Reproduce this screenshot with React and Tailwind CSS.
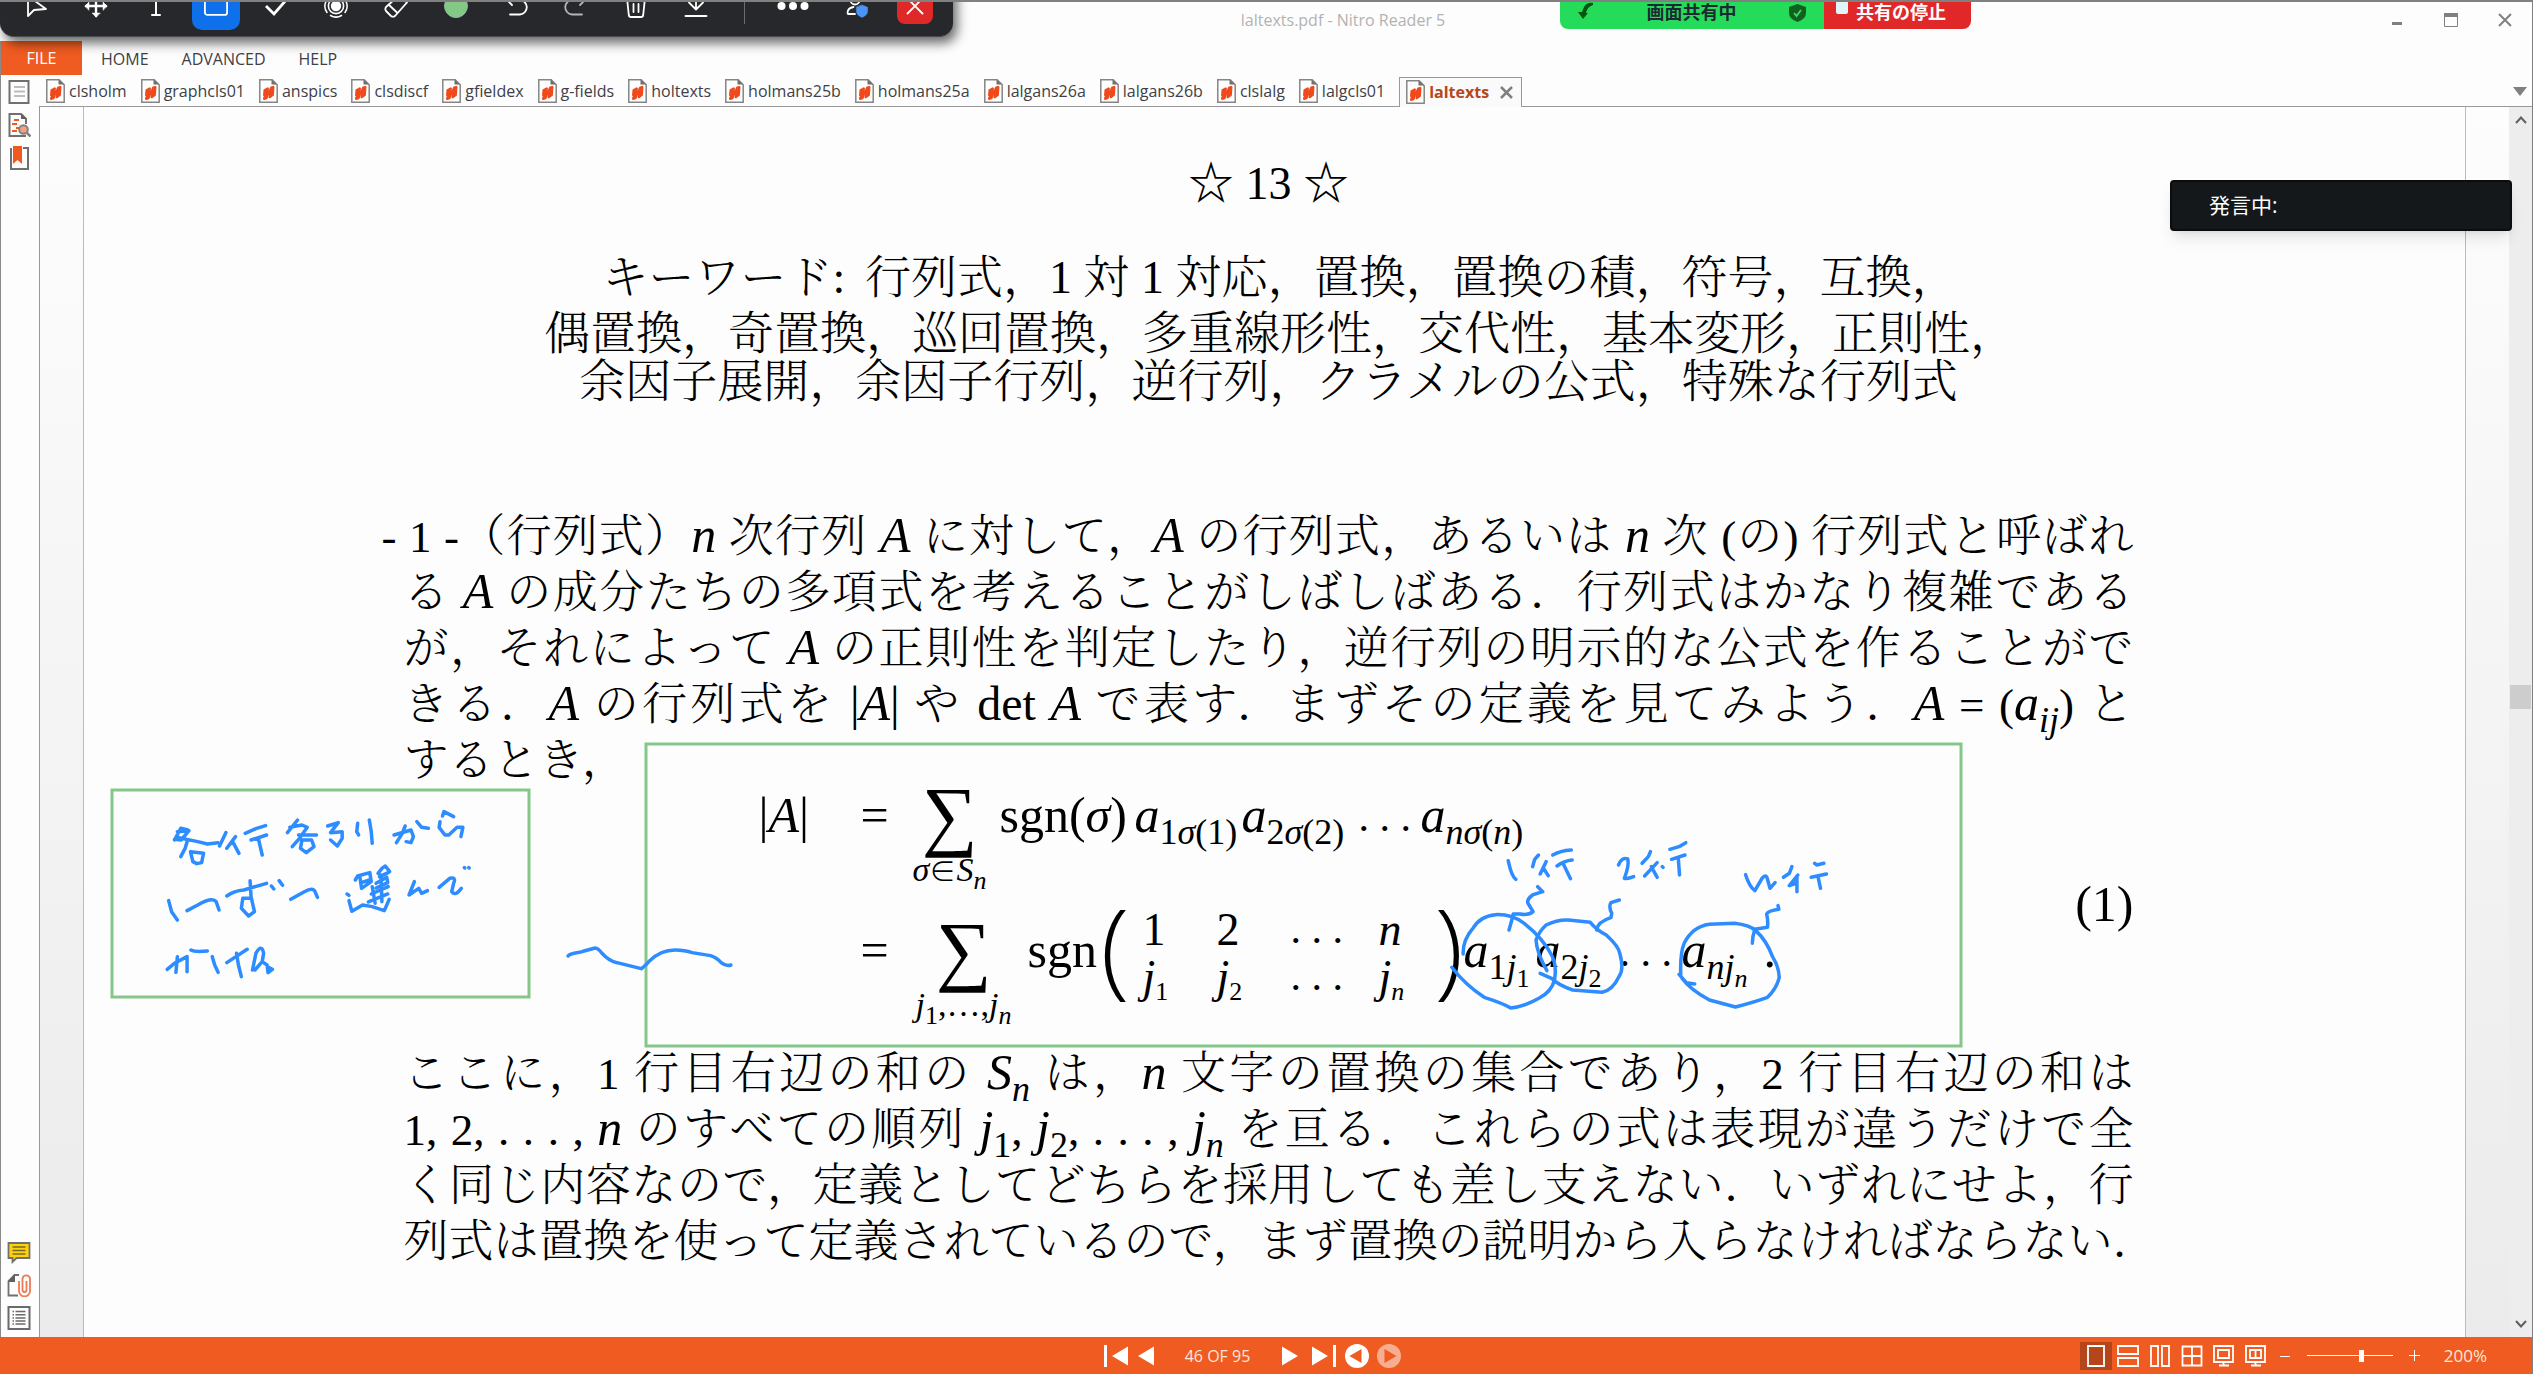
import React from "react";

const tabs = [
  "clsholm", "graphcls01", "anspics", "clsdiscf", "gfieldex", "g-fields", "holtexts",
  "holmans25b", "holmans25a", "lalgans26a", "lalgans26b", "clslalg", "lalgcls01",
];

/* ---------- small icons ---------- */

function PdfIcon() {
  return (
    <svg width="19" height="24" viewBox="0 0 19 24" className="shrink-0" aria-hidden="true">
      <path d="M.8.8h12.4l5 5v17.4H.8z" fill="#fff" stroke="#858585" strokeWidth="1.5" />
      <path d="M12.5.5v5h5.5z" fill="#6f6f6f" />
      <path d="M4.500 10.500l4.200-2.300 1.300.9-.5 3 1.800-4.300 3.200-1.100 1 1.100-.6 8.600-4 3.200-1.400-.8.4-3.200-1.500 4.400-3.600 1.200-1-1.600 1-2.400-.8-.6z" fill="#f04a1c" />
    </svg>
  );
}

const S = ({ children, size = 24, ...p }) => (
  <svg width={size} height={size} viewBox="0 0 24 24" fill="none" stroke="#fff" strokeWidth="1.8" strokeLinecap="round" strokeLinejoin="round" aria-hidden="true" {...p}>
    {children}
  </svg>
);

const tools = [
  { label: "選択", icon: <S><path d="M4 2v20l6-6 12-1z" /></S> },
  { label: "移動", icon: <S><path d="M12 2v20M2 12h20" strokeWidth="2.4" /><path d="M12 1l-4 4h8zM12 23l-4-4h8zM1 12l4-4v8zM23 12l-4-4v8z" fill="#fff" strokeWidth=".5" /></S> },
  { label: "テキスト", icon: <S><path d="M5 5V2h14v3M12 2v19M8 21h8" strokeWidth="2" /></S> },
  { label: "四角形", active: true, icon: <S><rect x="0.9" y="0.9" width="22.2" height="20" rx="2.5" /></S> },
  { label: "スタンプ", icon: <S><path d="M2 12l8 8L23 5" strokeWidth="2.8" strokeLinecap="butt" strokeLinejoin="miter" /></S> },
  { label: "スポットライト", icon: <S><circle cx="12" cy="12" r="4.3" fill="#fff" /><circle cx="12" cy="12" r="7.6" strokeWidth="1.6" /><path d="M6.5 21.500a10.800 10.800 0 0 0 11 0M2 7.500a10.800 10.800 0 0 0 1 11M22 7.500a10.800 10.800 0 0 1-1 11" strokeWidth="1.5" /></S> },
  { label: "消しゴム", icon: <S><path d="M15 1.500l8 7L11 22q-2 1.400-4 0l-5-5q-1.300-2 0-4zM4.500 10.500l9 8.500" /></S> },
  { label: "色", icon: <S><circle cx="12" cy="12" r="11.500" fill="#84c886" stroke="#93b7a0" strokeWidth="1" /></S> },
  { label: "元に戻す", icon: <S><path d="M8 1L3 6l5 5M3 6h12a7 7 0 0 1 1 14.500H6" /></S> },
  { label: "やり直し", icon: <S stroke="#b4b5b7"><path d="M16 1l5 5-5 5M21 6H9a7 7 0 0 0-1 14.500h10" /></S> },
  { label: "消去", icon: <S><path d="M1 4h22M3 4l1.800 17q.3 2 2 2h10.400q1.700 0 2-2L21 4M9.500 10v8M14.500 10v8M8 4V1h8v3" /></S> },
  { label: "保存", icon: <S><path d="M12 0v15M5 8.500l7 7 7-7M1.500 22h21" /></S> },
];

function ShareToolbar() {
  return (
    <div role="toolbar" aria-label="コメントツール" className="absolute -top-[27px] left-0 z-20 flex h-[62px] items-center rounded-[14px] border-b border-[#4a4b4e] bg-[#26282c] pr-5 pl-3 shadow-[4px_6px_12px_rgba(0,0,0,0.6)]">
      <div className="flex gap-3">
        {tools.map((t) => (
          <button key={t.label} aria-label={t.label} className={"flex size-12 items-center justify-center rounded-[10px] " + (t.active ? "bg-[#0e71eb]" : "")}>
            {t.icon}
          </button>
        ))}
      </div>
      <div className="mx-6 h-9 w-px bg-[#6b6c6f]" />
      <button aria-label="詳細" className="flex size-12 items-center justify-center">
        <svg width="32" height="24" viewBox="0 0 32 24" fill="#fff" aria-hidden="true"><circle cx="4.500" cy="12" r="4" /><circle cx="16" cy="12" r="4" /><circle cx="27.500" cy="12" r="4" /></svg>
      </button>
      <button aria-label="参加者" className="ml-4 flex size-12 items-center justify-center">
        <S><circle cx="10" cy="6" r="4.500" /><path d="M10 20H3.500q-1 0-1-1 0-5 6-6" /><path d="M17 11l5.600 2.200v4.300q0 3.700-5.600 6-5.600-2.300-5.600-6v-4.300z" fill="#4a95f5" stroke="#4a95f5" strokeWidth=".5" /></S>
      </button>
      <button aria-label="閉じる" className="ml-4 flex size-9 items-center justify-center rounded-lg bg-[#df2828]">
        <S><path d="M4.500 4.500l15 15M19.500 4.500l-15 15" /></S>
      </button>
    </div>
  );
}

function SharePill() {
  return (
    <div className="absolute top-0 right-[561px] z-20 flex h-[27px] overflow-hidden rounded-b-lg text-[18px] leading-5 font-bold">
      <div className="flex w-[264px] items-start justify-between bg-[#24db5a] px-[18px] text-[#1d2a33]">
        <svg width="16" height="18" viewBox="0 0 16 18" aria-hidden="true"><path d="M15 1Q9 0 6 5L4 10H0l5 7 5-6H8q1-6 7-8z" fill="#0a5312" /></svg>
        <span>画面共有中</span>
        <svg width="17" height="18" viewBox="0 0 17 18" className="mt-0.5" aria-hidden="true"><path d="M8.500 0L17 3v6q0 6-8.500 9Q0 15 0 9V3z" fill="#12601f" /><path d="M5 9l2.500 3L12 6" fill="none" stroke="#3ddc6a" strokeWidth="1.800" /></svg>
      </div>
      <button className="flex w-[147px] items-start bg-[#e02828] pl-3 text-white">
        <span className="mr-2 size-3 rounded-b-xs bg-[#dff6f8]" />
        <span>共有の停止</span>
      </button>
    </div>
  );
}

/* ---------- mathematics ---------- */

const I = ({ children }) => <i className="font-[Liberation_Serif] text-[50px] leading-none">{children}</i>;
const N = ({ children }) => <span className="font-[Liberation_Serif] text-[48px] leading-none">{children}</span>;
const Sub = ({ children }) => <span className="relative top-3 font-[Liberation_Serif] text-[36px] leading-none">{children}</span>;
const Sub2 = ({ children }) => <span className="relative top-2 text-[26px] leading-none">{children}</span>;
const Dots = () => <span className="text-[42px]">. . .</span>;

function Line({ children, first, last }) {
  return (
    <p className={"h-14 text-[45px] leading-[56px] whitespace-nowrap " + (first ? "-ml-[22px] " : "") + (last ? "" : "[text-align-last:justify]")}>
      {children}
    </p>
  );
}

function Sum({ children, className }) {
  return (
    <span className={"flex h-[82px] flex-col items-center " + className}>
      <span className="h-20 text-[78px] leading-[82px]">∑</span>
      <span className="text-[34px] leading-8">{children}</span>
    </span>
  );
}

function Equation() {
  const row = "flex h-[82px] items-center whitespace-nowrap";
  const fence = "-mt-3 font-[Open_Sans] text-[106px] leading-[94px] font-light";
  return (
    <div className="-mt-[15px] mb-3 flex items-center justify-between pl-[355px] font-[Liberation_Serif] text-[50px] leading-[50px]">
      <div className="flex flex-col gap-[53px] pb-[43px]">
        <div className={row}>
          <span className="w-[102px]">|<i>A</i>|</span>
          <span className="w-[47px]">=</span>
          <Sum className="w-[84px]"><i>σ</i>∈<i>S</i><Sub2><i>n</i></Sub2></Sum>
          <span className="ml-2 w-[135px]">sgn(<i>σ</i>)</span>
          <span className="w-[107px]"><i>a</i><Sub>1<i>σ</i>(1)</Sub></span>
          <span className="w-[117px]"><i>a</i><Sub>2<i>σ</i>(2)</Sub></span>
          <span className="w-[62px]"><Dots /></span>
          <span><i>a</i><Sub><i>nσ</i>(<i>n</i>)</Sub></span>
        </div>
        <div className={row}>
          <span className="w-[102px]" />
          <span className="w-[47px]">=</span>
          <Sum className="w-[112px]"><i>j</i><Sub2>1</Sub2>,…,<i>j</i><Sub2><i>n</i></Sub2></Sum>
          <span className="ml-2 w-[73px]">sgn</span>
          <span className={"w-[42px] " + fence}>(</span>
          <span className="mt-1.5 grid grid-cols-[74px_74px_88px_56px] text-[46px] leading-[47px]">
            <span>1</span><span>2</span><Dots /><i>n</i>
            <span><i>j</i><Sub2>1</Sub2></span><span><i>j</i><Sub2>2</Sub2></span><Dots /><span><i>j</i><Sub2><i>n</i></Sub2></span>
          </span>
          <span className={"w-[29px] " + fence}>)</span>
          <span className="w-[72px]"><i>a</i><Sub>1<i>j</i><Sub2>1</Sub2></Sub></span>
          <span className="w-[84px]"><i>a</i><Sub>2<i>j</i><Sub2>2</Sub2></Sub></span>
          <span className="w-[62px]"><Dots /></span>
          <span className="w-[82px]"><i>a</i><Sub><i>nj</i><Sub2><i>n</i></Sub2></Sub></span>
          <span>.</span>
        </div>
      </div>
      <span>(1)</span>
    </div>
  );
}

/* ---------- pen annotations over the page ---------- */

function Ink() {
  return (
    <svg className="pointer-events-none absolute top-0 left-0 overflow-visible" width="1" height="1" fill="none" stroke="#2d8cff" strokeWidth="3.5" strokeLinecap="round" strokeLinejoin="round" aria-label="手書きの注釈">
      <g stroke="#85c78a" strokeWidth="3" strokeLinejoin="miter">
        <rect x="-292" y="683" width="417" height="207" />
        <rect x="242" y="637" width="1315" height="302" />
      </g>
      <g transform="translate(-405 633) scale(.4847 .3333)">
        {[
          "M390 270L375 265L362 300M368 275L392 272L376 300L362 298M366 292L410 305L430 312L452 308M388 305L384 325L375 350M395 335L400 365L408 371L418 368L422 340L395 335",
          "M468 278L455 318M488 290L470 325M482 305L495 340M508 280L530 266L550 257M520 300L552 285M535 295L543 345",
          "M616 240L595 278M600 262L625 255L636 262L620 295L605 320M618 285L655 285M625 300L622 325L634 338L650 320L645 300L625 300",
          "M678 258L700 248L684 278L708 275L708 295L698 318L684 300M740 250L738 275L742 285M764 240L768 275L770 310",
          "M815 285L850 270L855 290L850 308L840 305M838 258L832 280L820 308M862 245L872 262L886 265",
          "M915 228L918 215L938 230M910 245L908 262L920 285L928 285L945 262L957 262L953 290",
          "M350 482L356 515L368 540M388 512L410 495Q440 470 448 485L454 510M470 468Q485 452 505 450L552 430M518 422L520 470L527 515L515 528L500 505L503 475L520 475M562 438L567 447M578 422L585 436M602 478L630 455Q648 440 652 455L657 472",
          "M718 462L722 466M722 482L728 514L750 495L770 500L795 512L805 478M735 420L740 408L765 398L768 425L748 445L745 415M748 428L764 420M782 400L790 385L797 378L806 395M785 410L803 398M778 430L800 412L802 428L778 444M768 462L803 440M762 486L802 462M770 440L776 490M788 405L790 485",
          "M857 425L846 465L866 445L872 460L884 452M908 442L930 415Q944 410 938 430L934 455Q942 470 954 445M960 383L961 384M969 383L970 384",
          "M347 688L362 670L388 650L388 695M368 650L365 697M396 630Q405 637 430 633M440 650L445 675L452 697M470 668L512 628M490 640L494 675L500 710M523 690L530 640Q542 610 546 640L543 665L528 690M543 665L553 675L555 698L564 688L556 682",
          "M1174 648C1180 638 1195 640 1205 634L1230 624Q1236 624 1244 640Q1260 665 1275 668L1325 686Q1332 680 1342 663Q1365 630 1395 630Q1415 630 1430 638L1468 647Q1480 652 1490 668Q1500 680 1510 675",
        ].map((d) => <path key={d} d={d} vectorEffect="non-scaling-stroke" />)}
      </g>
      <g transform="translate(935 633) scale(.4209 .3333)">
        {[
          "M402 362Q410 410 420 418M474 345L465 358L460 380M492 365L478 402M486 385L497 407M508 345Q525 332 552 330M518 378Q535 362 554 360M533 372L550 416",
          "M664 375Q672 350 686 357Q690 375 678 415Q685 418 700 410M740 335L735 350L720 370M756 368L726 408M742 380L756 412M768 380L770 382M786 328L808 320L824 308M790 358L822 345M806 352L809 405",
          "M966 404Q975 440 988 452L1005 415Q1015 400 1018 418L1024 445L1036 428M1076 380L1070 400L1056 412M1090 405L1070 437L1085 430M1088 410L1088 455M1130 370L1135 375L1152 370M1122 412L1158 402M1138 410L1144 445",
          "M295 642Q294 600 318 565Q335 528 372 524Q410 522 440 550Q485 595 505 645Q518 675 512 720Q505 755 475 775Q440 800 408 804Q390 790 345 772Q300 735 268 682",
          "M472 440L484 455Q470 460 460 465Q444 480 450 492L461 515Q450 527 430 522L414 522Q410 545 404 570",
          "M494 692Q470 640 468 600Q475 575 492 555Q520 538 545 540L597 547Q612 570 635 585Q665 620 667 640Q678 690 665 710Q650 750 625 757L555 750Q520 735 505 715L478 700",
          "M666 480L646 488Q640 500 648 520L646 533Q615 545 612 570",
          "M845 732L825 728L808 703M812 705Q810 640 820 610Q840 560 880 553L940 550Q975 555 990 572Q1015 600 1030 650Q1045 680 1046 712Q1040 745 1018 772Q990 785 942 801Q910 790 880 780Q835 750 815 715",
          "M1043 497L1045 508Q1020 512 1016 522Q1020 545 1018 562L988 568Q982 590 982 610",
        ].map((d) => <path key={d} d={d} vectorEffect="non-scaling-stroke" />)}
      </g>
    </svg>
  );
}

function Sidebar() {
  return (
    <aside className="flex w-[39px] shrink-0 flex-col items-center justify-between border-l border-[#8a8a8a] bg-[#fdfdfd] pt-[5px] pr-[3px] pb-[7px]">
      <div className="flex flex-col gap-[9px]">
        <button aria-label="ページ">
          <svg width="24" height="24" viewBox="0 0 24 24" fill="none" aria-hidden="true"><path d="M2.500 1h19v22h-19z" stroke="#707070" strokeWidth="2" /><path d="M7 7h11M7 11.500h11M7 16h11" stroke="#bdbdbd" strokeWidth="1.800" /></svg>
        </button>
        <button aria-label="検索">
          <svg width="24" height="24" viewBox="0 0 24 24" fill="none" aria-hidden="true"><path d="M14 1H2.500v22H19M14 1l5 5v5" stroke="#707070" strokeWidth="2" /><path d="M14 0v6h6z" fill="#606060" /><path d="M7 7h5M5 11h5M5 18h5M9 15h4" stroke="#f05a1e" strokeWidth="1.800" /><circle cx="16.500" cy="16.500" r="4.300" stroke="#808080" strokeWidth="2" fill="#f6a183" /><path d="M20 20l3.500 3.500" stroke="#808080" strokeWidth="2.500" /></svg>
        </button>
        <button aria-label="しおり">
          <svg width="24" height="24" viewBox="0 0 24 24" fill="none" aria-hidden="true"><path d="M4 2v21h17V2h-5" stroke="#707070" strokeWidth="2" /><path d="M6 0h9v18l-4.500-4L6 18z" fill="#f05a1e" /></svg>
        </button>
      </div>
      <div className="flex flex-col gap-[9px]">
        <button aria-label="コメント">
          <svg width="24" height="24" viewBox="0 0 24 24" aria-hidden="true"><path d="M1.500 3h21v15h-13l-4 4v-4h-4z" fill="#fdd20c" stroke="#707070" strokeWidth="1.800" /><path d="M5.500 7h13M5.500 10.500h13M5.500 14h13" stroke="#77682c" strokeWidth="1.600" /></svg>
        </button>
        <button aria-label="添付ファイル">
          <svg width="24" height="24" viewBox="0 0 24 24" fill="none" aria-hidden="true"><path d="M11 22.500H1.500V8l6-6H12" stroke="#707070" strokeWidth="1.800" /><path d="M1 9l7-8v8z" fill="#606060" /><path d="M12 8v10a5.500 5.500 0 0 0 11 0V5.500a3.800 3.800 0 0 0-7.500 0V17a2 2 0 0 0 4 0V8" stroke="#ee7b55" strokeWidth="1.800" /></svg>
        </button>
        <button aria-label="一覧">
          <svg width="24" height="24" viewBox="0 0 24 24" fill="none" stroke="#6a6a6a" aria-hidden="true"><path d="M1.500 1h21v22h-21z" strokeWidth="2" /><path d="M5.500 5.500h13M5.500 8.800h13M5.500 12h13M5.500 15h13M5.500 18h13" strokeWidth="1.500" strokeDasharray="1.500 1.500 10 9" /></svg>
        </button>
      </div>
    </aside>
  );
}

const views = [
  { label: "単一ページ", on: true, d: "M5 2h16v20H5z" },
  { label: "連続", d: "M3 2h20v8H3zM3 14h20v8H3z" },
  { label: "見開き", d: "M4 2h7v20H4zM15 2h7v20h-7z" },
  { label: "見開き連続", d: "M3.500 2.500h19v19h-19zM13 2.500v19M3.500 12h19" },
  { label: "全画面", d: "M3 2h19v16H3zM7 6h11v8H7zM12.500 18v3M8 21.500h10" },
  { label: "全画面見開き", d: "M3 2h19v16H3zM7 6h11v8H7zM12.500 6v8M12.500 18v3M8 21.500h10" },
];

function Footer() {
  return (
    <footer className="flex h-[37px] shrink-0 items-center bg-[#ef5b20] text-[16px] text-[#fde6dc]">
      <div className="flex-1" />
      <div className="ml-4 flex items-center">
        <button aria-label="最初のページ" className="mr-2"><svg width="26" height="22" fill="#fff" aria-hidden="true"><path d="M1 0h3v22H1zM9 11L25 1.500v19z" /></svg></button>
        <button aria-label="前のページ"><svg width="18" height="22" fill="#fff" aria-hidden="true"><path d="M1 11L17 1.500v19z" /></svg></button>
        <span className="w-[126px] text-center">46 OF 95</span>
        <button aria-label="次のページ" className="mr-3"><svg width="18" height="22" fill="#fff" aria-hidden="true"><path d="M17 11L1 1.500v19z" /></svg></button>
        <button aria-label="最後のページ" className="mr-2"><svg width="26" height="22" fill="#fff" aria-hidden="true"><path d="M22 0h3v22h-3zM17 11L1 1.500v19z" /></svg></button>
        <button aria-label="戻る" className="mr-2"><svg width="24" height="24" aria-hidden="true"><circle cx="12" cy="12" r="12" fill="#fff" /><path d="M4.500 12L16.500 5v14z" fill="#ef5b20" /></svg></button>
        <button aria-label="進む"><svg width="24" height="24" aria-hidden="true"><circle cx="12" cy="12" r="12" fill="#f7ae90" /><path d="M19.500 12L7.500 5v14z" fill="#ef5b20" /></svg></button>
      </div>
      <div className="flex flex-1 items-center justify-end pr-[45px]">
        {views.map((v) => (
          <button key={v.label} aria-label={v.label} className={"flex h-7 w-8 items-center justify-center " + (v.on ? "bg-[#b5451a]" : "")}>
            <svg width="26" height="24" viewBox="0 0 26 24" fill="none" stroke="#fff" strokeWidth="1.800" aria-hidden="true"><path d={v.d} /></svg>
          </button>
        ))}
        <button aria-label="縮小" className="ml-2 flex w-[11px] justify-center"><svg width="10" height="10" stroke="#fff" aria-hidden="true"><path d="M0 5.500h10" /></svg></button>
        <input type="range" aria-label="ズーム" min="0" max="100" defaultValue="64" className="mx-4 h-4 w-[86px] appearance-none bg-[linear-gradient(#fff,#fff)] bg-[length:100%_1px] bg-center bg-no-repeat [&::-webkit-slider-thumb]:h-3 [&::-webkit-slider-thumb]:w-[5px] [&::-webkit-slider-thumb]:appearance-none [&::-webkit-slider-thumb]:bg-white" />
        <button aria-label="拡大" className="mr-6 flex w-[11px] justify-center"><svg width="11" height="11" stroke="#fff" aria-hidden="true"><path d="M0 5.500h11M5.500 0v11" /></svg></button>
        <span className="text-[17px]">200%</span>
      </div>
    </footer>
  );
}

export default function App() {
  return (
    <div lang="ja" className="relative flex h-screen flex-col overflow-hidden border-t-2 border-r border-[#808080] bg-[#fdfdfd] font-['Open_Sans','Noto_Sans_CJK_JP',sans-serif] text-[#3f3f46]">
      <ShareToolbar />
      <SharePill />
      <header className="flex h-[39px] shrink-0 items-center pb-1 pl-[174px] text-[16px] text-[#b2b2b2]">
        <div className="flex-1" />
        <h1>laltexts.pdf - Nitro Reader 5</h1>
        <div className="flex flex-1 items-center justify-end gap-10 pr-5">
          <button aria-label="最小化"><svg width="14" height="14" aria-hidden="true"><path d="M2 9h10v3H2z" fill="#808080" /></svg></button>
          <button aria-label="最大化"><svg width="14" height="14" fill="none" stroke="#808080" aria-hidden="true"><path d="M.5 1.500h13v12H.5z" /><path d="M0 2h14" strokeWidth="4" /></svg></button>
          <button aria-label="閉じる"><svg width="14" height="14" stroke="#808080" strokeWidth="2" aria-hidden="true"><path d="M1 1l12 12M13 1L1 13" /></svg></button>
        </div>
      </header>
      <nav className="flex h-[34px] shrink-0 items-center border-l border-[#8a8a8a] text-[16px]">
        <button className="mr-[19px] h-full w-[81px] bg-[#ef5b20] text-white">FILE</button>
        <div className="flex gap-[33px] pt-px">
          <button>HOME</button>
          <button>ADVANCED</button>
          <button>HELP</button>
        </div>
      </nav>
      <div className="flex min-h-0 flex-1">
        <Sidebar />
        <div className="flex min-w-0 flex-1 flex-col">
          <div role="tablist" className="flex h-8 shrink-0 items-end border-b border-[#999] text-[16px]">
            <div className="flex h-full items-center gap-[14px] pr-[14px] pl-[7px]">
              {tabs.map((t) => (
                <button key={t} role="tab" className="flex items-center gap-1"><PdfIcon />{t}</button>
              ))}
            </div>
            <div className="-mb-px flex h-[30px] items-center gap-[11px] border border-b-0 border-[#999] bg-[#fafafa] pr-2 pb-px pl-[6px]">
              <button role="tab" aria-selected="true" className="flex items-center gap-1 font-bold text-[#b8461a]"><PdfIcon />laltexts</button>
              <button aria-label="タブを閉じる"><svg width="13" height="13" stroke="#808080" strokeWidth="2.500" aria-hidden="true"><path d="M1 1l11 11M12 1L1 12" /></svg></button>
            </div>
            <button aria-label="タブ一覧" className="mr-[5px] mb-[10px] ml-auto"><svg width="14" height="9" aria-hidden="true"><path d="M0 0h14L7 9z" fill="#808080" /></svg></button>
          </div>
          <div className="flex min-h-0 flex-1 border-l border-[#999] bg-linear-to-b from-[#fdfdfd] to-[#ebebeb]">
            <main className="mr-[43px] ml-[43px] min-w-0 flex-1 overflow-hidden border-x border-[#bbb] bg-[#fdfdfd] pr-3">
              <article className="relative mx-auto w-full max-w-[1730px] pt-[49px] font-['Liberation_Serif','Noto_Serif_CJK_JP','Noto_Sans_CJK_JP',serif] font-light text-black">
                <h2 className="mb-[38px] text-center text-[46px] leading-[56px]">☆ 13 ☆</h2>
                <div className="mb-[107px] text-center text-[46px] whitespace-nowrap">
                  <p className="h-14 leading-[56px]">キーワード: <span className="ml-2">行列式，1 対 1 対応，置換，置換の積，符号，互換</span><span className="inline-block w-[23px]">，</span></p>
                  <p className="h-14 leading-[56px]">偶置換，奇置換，巡回置換，多重線形性，交代性，基本変形，正則性<span className="inline-block w-[23px]">，</span></p>
                  <p className="h-10 leading-[40px]">余因子展開，余因子行列，逆行列，クラメルの公式，特殊な行列式</p>
                </div>
                <Line first>- 1 -（行列式）<I>n</I> 次行列 <I>A</I> に対して，<I>A</I> の行列式，あるいは <I>n</I> 次 (の) 行列式と呼ばれ</Line>
                <Line>る <I>A</I> の成分たちの多項式を考えることがしばしばある．行列式はかなり複雑である</Line>
                <Line>が，それによって <I>A</I> の正則性を判定したり，逆行列の明示的な公式を作ることがで</Line>
                <Line>きる．<I>A</I> の行列式を <N>|</N><I>A</I><N>|</N> や <N>det</N> <I>A</I> で表す．まずその定義を見てみよう．<I>A</I> = (<I>a</I><Sub><i>ij</i></Sub>) と</Line>
                <Line last>するとき，</Line>
                <Equation />
                <Line>ここに，1 行目右辺の和の <I>S</I><Sub><i>n</i></Sub> は，<I>n</I> 文字の置換の集合であり，2 行目右辺の和は</Line>
                <Line>1, 2, . . . , <I>n</I> のすべての順列 <I>j</I><Sub>1</Sub>, <I>j</I><Sub>2</Sub>, . . . , <I>j</I><Sub><i>n</i></Sub> を亘る．これらの式は表現が違うだけで全</Line>
                <Line>く同じ内容なので，定義としてどちらを採用しても差し支えない．いずれにせよ，行</Line>
                <Line>列式は置換を使って定義されているので，まず置換の説明から入らなければならない<span className="inline-block w-[22px]">．</span></Line>
                <Ink />
              </article>
            </main>
            <div className="flex w-[23px] shrink-0 flex-col items-center justify-between bg-[#ededed] py-[9px]">
              <button aria-label="上へ"><svg width="12" height="8" fill="none" stroke="#606060" strokeWidth="2" aria-hidden="true"><path d="M1 7l5-5.500L11 7" /></svg></button>
              <div className="-mt-[50px] h-6 w-[21px] bg-[#cdcdcd]" />
              <button aria-label="下へ"><svg width="12" height="8" fill="none" stroke="#606060" strokeWidth="2" aria-hidden="true"><path d="M1 1l5 5.500L11 1" /></svg></button>
            </div>
          </div>
        </div>
      </div>
      <div className="absolute top-[178px] right-5 z-10 flex h-[51px] w-[342px] items-center rounded-sm border-2 border-[#0b0c0d] bg-[#14181b] pl-[37px] text-[21px] text-white shadow-lg">
        発言中:
      </div>
      <Footer />
    </div>
  );
}
